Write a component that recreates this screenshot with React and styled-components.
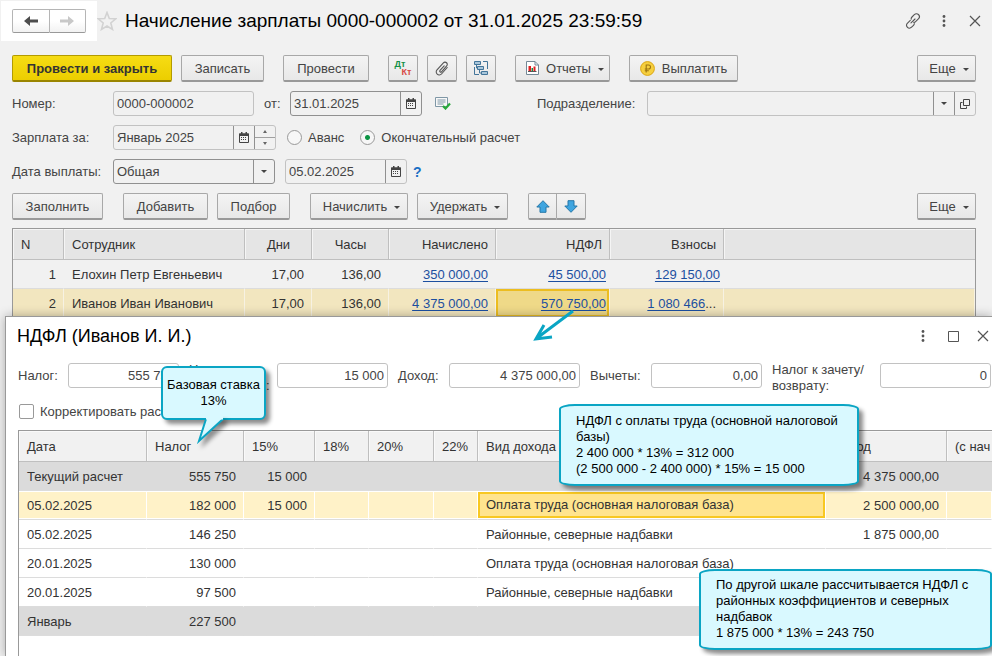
import React from "react";
import styled, { createGlobalStyle, css } from "styled-components";

const GlobalStyle = createGlobalStyle`
  *, *::before, *::after { box-sizing: border-box; }
  body { margin: 0; background: #f1f1f1; }
  body, button, input, select {
    font-family: "Liberation Sans", Arial, sans-serif;
    font-size: 13px;
    color: #444;
  }
`;

const Page = styled.div`
  position: relative;
  min-height: 100vh;
  overflow: hidden;
  background: #f1f1f1;
`;

/* ---------- document window ---------- */

const TitleBar = styled.header`
  display: flex;
  align-items: center;
  height: 41px;
  padding: 1px 9px 0 1px;
`;

const NavBox = styled.nav`
  display: flex;
  width: 96px;
  height: 40px;
  padding: 8px 11px;
  background: #fff;
`;

const NavButton = styled.button`
  display: flex;
  flex: 1;
  align-items: center;
  justify-content: center;
  padding: 0;
  border: 1px solid #b5b5b5;
  border-bottom-color: #999;
  background: linear-gradient(#fff 50%, #f2f2f2);
  color: ${(p) => (p.$dim ? "#c8c8c8" : "#4d4d4d")};
  &:first-child { border-radius: 2px 0 0 2px; }
  &:last-child { border-left: 0; border-radius: 0 2px 2px 0; }
`;

const Heading = styled.h1`
  margin: 0 0 0 8px;
  font-size: ${(p) => p.$size || 19}px;
  font-weight: 400;
  color: #000;
  white-space: nowrap;
`;

const WindowTools = styled.div`
  display: flex;
  align-items: center;
  gap: ${(p) => p.$gap || 14}px;
  margin-left: auto;
`;

const GhostButton = styled.button`
  display: flex;
  align-items: center;
  justify-content: center;
  width: 16px;
  height: 16px;
  padding: 0;
  border: 0;
  background: none;
  color: #555;
`;

const Star = styled(GhostButton)`
  width: 20px;
  height: 20px;
`;

const Form = styled.main`
  display: flex;
  flex-direction: column;
  gap: 9px;
  padding: 14px 16px 8px 12px;
`;

const Bar = styled.div`
  display: flex;
  gap: ${(p) => p.$gap || 19}px;
  height: 27px;
`;

const Cluster = styled.div`
  display: flex;
  gap: 9px;
`;

const Push = styled.div`
  margin-left: auto;
`;

const Button = styled.button`
  display: flex;
  align-items: center;
  justify-content: center;
  gap: 7px;
  width: ${(p) => p.$w}px;
  height: 27px;
  padding: 0 0 0 ${(p) => (p.$menu ? 5 : 0)}px;
  border: 1px solid #a8a8a8;
  border-bottom: 2px solid #999;
  border-radius: 2px;
  background: linear-gradient(#f4f4f4, #e8e8e8);
  white-space: nowrap;
  ${(p) =>
    p.$primary &&
    css`
      border-color: #b39b00;
      border-bottom-color: #9a8500;
      background: linear-gradient(#f6dc14, #ecce00);
      color: #333;
      font-weight: 700;
    `}
`;

const Joined = styled.div`
  display: flex;
  & > button:first-child { border-radius: 2px 0 0 2px; }
  & > button:last-child { border-left: 0; border-radius: 0 2px 2px 0; }
`;

const DtKt = styled.span`
  display: grid;
  width: 17px;
  font-size: 9px;
  font-weight: 700;
  line-height: 8px;
  text-align: left;
  color: #159048;
  & > span:last-child { color: #d84a45; text-align: right; }
`;

const FieldRow = styled.div`
  display: flex;
  align-items: center;
  height: 25px;
`;

const Label = styled.label`
  flex: none;
  width: ${(p) => (p.$w ? p.$w + "px" : "auto")};
  margin-left: ${(p) => p.$ml || 0}px;
  padding-top: ${(p) => (p.$tall ? 4 : 0)}px;
  line-height: 16px;
  white-space: nowrap;
`;

const Box = styled.div`
  display: flex;
  flex: ${(p) => (p.$w ? "none" : 1)};
  width: ${(p) => (p.$w ? p.$w + "px" : "auto")};
  height: 25px;
  overflow: hidden;
  border: 1px solid ${(p) => (p.$strong ? "#909090" : "#c2c2c2")};
  border-radius: 3px;
  background: ${(p) => (p.$white ? "#fff" : "transparent")};
`;

const control = css`
  flex: 1;
  min-width: 0;
  padding: 0 3px;
  border: 0;
  outline: 0;
  background: none;
`;

const TextInput = styled.input`
  ${control}
  text-align: ${(p) => (p.$right ? "right" : "left")};
`;

const Select = styled.select`
  ${control}
  appearance: none;
`;

const Side = styled.button`
  display: flex;
  flex: none;
  align-items: center;
  justify-content: center;
  width: 21px;
  padding: 0;
  border: 0;
  border-left: 1px solid #909090;
  background: none;
`;

const Spinner = styled.div`
  display: flex;
  flex-direction: column;
  width: 21px;
  border-left: 1px solid #909090;
  & > button {
    display: flex;
    flex: 1;
    align-items: center;
    justify-content: center;
    padding: 0;
    border: 0;
    background: none;
  }
  & > button:last-child { border-top: 1px solid #a0a0a0; }
`;

const Radio = styled.input.attrs({ type: "radio" })`
  appearance: none;
  flex: none;
  width: 15px;
  height: 15px;
  margin: 0 6px 0 0;
  border: 1px solid #999;
  border-radius: 50%;
  background: #f7f7f7;
  &:checked { background: radial-gradient(circle, #0c9444 0 2px, #f7f7f7 3px); }
`;

const RadioLabel = styled.label`
  display: flex;
  align-items: center;
  margin-left: ${(p) => p.$ml}px;
`;

const Save = styled.span`
  display: flex;
  margin-left: 13px;
`;

const Help = styled.a`
  margin-left: 6px;
  font-size: 14px;
  font-weight: 700;
  color: #1a6fc4;
  text-decoration: none;
`;

/* ---------- tables ---------- */

const Table = styled.table`
  width: 100%;
  table-layout: fixed;
  border-collapse: separate;
  border-spacing: 0;
  color: #333;
`;

const StaffTable = styled(Table)`
  border: 1px solid #999;
`;

const StaffWrap = styled.div`
  padding: 0 16px 0 12px;
`;

const Col = styled.col`
  width: ${(p) => (p.$w ? p.$w + "px" : "auto")};
`;

const cell = css`
  overflow: hidden;
  padding: 0 ${(p) => p.$pr || 7}px 0 8px;
  text-align: ${(p) => p.$align || "left"};
  font-weight: 400;
  white-space: nowrap;
`;

const Th = styled.th`
  ${cell}
  height: 31px;
  border-right: 1px solid #bfbfbf;
  border-bottom: 1px solid #bfbfbf;
  background: ${(p) => (p.$light ? "#f1f1f1" : "#e5e5e5")};
  box-shadow: inset 1px 1px 0 rgba(255, 255, 255, 0.6);
  &:last-child { border-right: 0; padding-right: 0; }
`;

const Td = styled.td`
  ${cell}
  height: 29px;
  border-right: 1px solid transparent;
  border-bottom: 1px solid #dcdcdc;
`;

const StaffRow = styled.tr`
  ${(p) =>
    p.$current &&
    css`
      background: #f2e6bf;
      & > td { border-right-color: #f7f2e3; }
    `}
`;

const TaxRow = styled.tr`
  background: ${(p) =>
    p.$kind === "total" ? "#dbdbdb" : p.$kind === "current" ? "#fff2c8" : "#fff"};
  ${(p) =>
    p.$kind === "current" &&
    css`
      & > td { border-right-color: #fff; box-shadow: inset 0 1px 0 #fff, inset 0 -1px 0 #fff; }
    `}
`;

const StaffActive = styled(Td)`
  background: #efd988;
  box-shadow: inset 0 0 0 2px #ecbd20;
`;

const TaxActive = styled(Td)`
  && { box-shadow: inset 0 1px 0 #fff, inset 0 -1px 0 #fff; padding: 0; }
`;

const ActiveFrame = styled.div`
  height: 26px;
  padding: 0 6px;
  border: 2px solid #f8c822;
  background: #ffe48e;
  line-height: 22px;
`;

const Link = styled.a`
  color: #1c4fa0;
  text-decoration: underline;
  text-underline-offset: 2px;
`;

/* ---------- tax dialog ---------- */

const Dialog = styled.section`
  position: absolute;
  top: 316px;
  right: 0;
  bottom: 0;
  left: 5px;
  border-top: 1px solid #999;
  border-left: 1px solid #999;
  background: #fff;
  box-shadow: 0 0 10px rgba(0, 0, 0, 0.3);
`;

const DialogTitle = styled.header`
  display: flex;
  align-items: center;
  height: 38px;
  padding-right: 1px;
  padding-left: 3px;
`;

const DialogFields = styled.div`
  display: flex;
  align-items: center;
  gap: 10px;
  margin-top: 8px;
  padding: 0 1px 0 12px;
  height: 25px;
`;

const WideLabel = styled(Label)`
  flex: 1;
`;

const CheckRow = styled.label`
  display: flex;
  align-items: center;
  gap: 6px;
  height: 16px;
  margin: 15px 0 11px 13px;
`;

const Checkbox = styled.input.attrs({ type: "checkbox" })`
  appearance: none;
  width: 15px;
  height: 15px;
  margin: 0;
  border: 1px solid #999;
  border-radius: 2px;
  background: #fff;
`;

const TaxWrap = styled.div`
  height: 226px;
  margin-left: 12px;
  border-top: 1px solid #999;
  border-left: 1px solid #999;
`;

/* ---------- notes over the windows ---------- */

const Note = styled.aside`
  position: absolute;
  border: 2px solid #0aa5c4;
  background: #d9f9ff;
  box-shadow: 4px 4px 4px rgba(0, 0, 0, 0.45);
  line-height: 16px;
  color: #000;
`;

const RateNote = styled(Note)`
  top: 366px;
  left: 161px;
  width: 105px;
  height: 54px;
  padding: 9px 0;
  border-radius: 6px;
  text-align: center;
  white-space: nowrap;
`;

const BaseNote = styled(Note)`
  top: 404px;
  left: 559px;
  width: 300px;
  padding: 7px 15px 7px;
  border-radius: 16px / 5px;
`;

const ScaleNote = styled(Note)`
  top: 569px;
  left: 699px;
  width: 293px;
  padding: 6px 15px 7px;
  border-radius: 16px / 5px;
`;

const Tail = styled.svg`
  position: absolute;
  top: 48px;
  left: 32px;
  overflow: visible;
  filter: drop-shadow(4px 4px 2px rgba(0, 0, 0, 0.4));
  clip-path: inset(0 -20px -20px -20px);
`;

const Arrow = styled.svg`
  position: absolute;
  top: 306px;
  left: 530px;
`;

/* ---------- icons ---------- */

const BackIcon = ({ flip }) => (
  <svg width="16" height="14" viewBox="0 0 16 14" fill="currentColor" aria-hidden="true">
    <path transform={flip ? "matrix(-1 0 0 1 16 0)" : undefined} d="M1 7l6-5v3.5h8v3H7V12z" />
  </svg>
);

const StarIcon = () => (
  <svg width="20" height="20" viewBox="0 0 20 20" fill="none" stroke="#d2d2d2" strokeWidth="1.600" aria-hidden="true">
    <path d="M10 1.500l2.300 6 6.500.3-5 4.200 1.700 6.400L10 15l-5.500 3.400 1.700-6.400-5-4.200 6.500-.3z" />
  </svg>
);

const ChainIcon = () => (
  <svg width="16" height="16" viewBox="0 0 16 16" fill="none" stroke="currentColor" strokeWidth="1.100" strokeLinecap="round" aria-hidden="true">
    <path d="M6.200 6.200C6 5.200 6.300 4.700 7 4l2.300-2.300c1.300-1.300 3-1.300 4.100-.2s1.500 2.800.2 4.100l-3 3c-.6.600-1.200.900-2 .700M9.300 10.500c0 .8-.3 1.300-.8 1.800l-1.900 1.900c-1.300 1.300-3 1.300-4.100.2s-1.500-2.800-.2-4.100l3-3M6 9.900L10 6" />
  </svg>
);

const DotsIcon = () => (
  <svg width="4" height="14" viewBox="0 0 4 14" fill="currentColor" aria-hidden="true">
    <circle cx="2" cy="2.500" r="1.400" /><circle cx="2" cy="7" r="1.400" /><circle cx="2" cy="11.500" r="1.400" />
  </svg>
);

const CrossIcon = () => (
  <svg width="12" height="12" viewBox="0 0 12 12" stroke="currentColor" strokeWidth="1.200" aria-hidden="true">
    <path d="M1 1l10 10M11 1L1 11" />
  </svg>
);

const SquareIcon = () => (
  <svg width="11" height="11" viewBox="0 0 11 11" fill="none" stroke="currentColor" aria-hidden="true">
    <path d="M.5.5h10v10H.5z" />
  </svg>
);

const Caret = () => (
  <svg width="6" height="4" viewBox="0 0 6 4" fill="#444" aria-hidden="true">
    <path d="M0 0h6L3 3z" />
  </svg>
);

const CaretBox = styled.span`
  display: flex;
  padding-top: 4px;
`;

const TinyTriangle = ({ up }) => (
  <svg width="4" height="3" viewBox="0 0 4 3" fill="#666" aria-hidden="true">
    <path d={up ? "M0 3h4L2 0z" : "M0 0h4L2 3z"} />
  </svg>
);

const CalendarIcon = () => (
  <svg width="10" height="11" viewBox="0 0 10 11" aria-hidden="true">
    <path d="M.5 2h9v8.500h-9z" fill="none" stroke="#444" />
    <path d="M0 1.500h10V4H0zM2 0h1.500v2H2zM6.500 0H8v2H6.500z" fill="#444" />
    <path d="M2 5.500h6M2 7.500h6" stroke="#444" strokeDasharray="1 1" />
  </svg>
);

const ClipIcon = () => (
  <svg width="14" height="15" viewBox="0 0 14 15" fill="none" stroke="#555" strokeWidth="1.100" strokeLinecap="round" aria-hidden="true">
    <path d="M9.200 4.800L5 9.400a1 1 0 0 0 1.500 1.400l5.200-5.900a2.200 2.200 0 0 0-3.300-3L2 8.900a3 3 0 0 0 4.500 4.100l5.700-6.500" />
  </svg>
);

const StructureIcon = () => (
  <svg width="16" height="15" viewBox="0 0 16 15" fill="#a9c6da" stroke="#43759a" aria-hidden="true">
    <path d="M1.500.5h6v3h-6zM4.500 5.500h6v3h-6zM8.500 10.500h6v3h-6z" />
    <path d="M10 .5h4.500V8M1.500 6v7.500H6M3.500 3.500v3.500h1M6.500 8.500V12h2" fill="none" />
  </svg>
);

const ReportIcon = () => (
  <svg width="13" height="14" viewBox="0 0 13 14" aria-hidden="true">
    <path d="M.5.500h8.500l3.500 3.500v9.500H.5z" fill="#fff" stroke="#758896" />
    <path d="M9 .5V4h3.500" fill="none" stroke="#758896" />
    <path d="M2.500 5H5v5H2.500z" fill="#e02020" />
    <path d="M5.500 7h1.500v3H5.500z" fill="#159048" />
    <path d="M7.500 5.500H9.500V10H7.500z" fill="#e02020" />
    <path d="M2 10.500h8.500" stroke="#555" />
  </svg>
);

const CoinIcon = () => (
  <svg width="15" height="15" viewBox="0 0 15 15" aria-hidden="true">
    <circle cx="7.500" cy="7.500" r="6.900" fill="#f6cf3e" stroke="#dba514" />
    <path d="M6.200 11.500V4h2.300a2 2 0 0 1 0 4H4.800M4.800 9.800h4" fill="none" stroke="#9c7410" strokeWidth="1.100" />
  </svg>
);

const PostedIcon = () => (
  <svg width="16" height="13" viewBox="0 0 16 13" fill="none" aria-hidden="true">
    <path d="M.5.5h12v9H.5z" stroke="#7f97a6" fill="#f8f8f8" />
    <path d="M2.500 3h8M2.500 5h8M2.500 7h6" stroke="#7f97a6" />
    <path d="M8 9l2.500 2.500L15 6.500" stroke="#27a83a" strokeWidth="2.200" />
  </svg>
);

const OpenIcon = () => (
  <svg width="10" height="10" viewBox="0 0 10 10" fill="none" stroke="#444" aria-hidden="true">
    <path d="M3.500.5h6v6h-6zM2.500 3.500h-2v6h6v-2" />
  </svg>
);

const MoveIcon = ({ down }) => (
  <svg width="14" height="13" viewBox="0 0 14 13" fill="#3ea5e0" stroke="#2577a8" aria-hidden="true">
    <path transform={down ? "matrix(1 0 0 -1 0 13)" : undefined} d="M7 .700L13.200 7H10v5.300H4V7H.800z" />
  </svg>
);

/* ---------- data ---------- */

const staff = [
  { n: 1, name: "Елохин Петр Евгеньевич", accrued: "350 000,00", tax: "45 500,00", fees: "129 150,00" },
  { n: 2, name: "Иванов Иван Иванович", accrued: "4 375 000,00", tax: "570 750,00", fees: "1 080 466", cut: true, current: true },
];

const taxes = [
  { kind: "total", date: "Текущий расчет", tax: "555 750", t15: "15 000", income: "4 375 000,00" },
  { kind: "current", date: "05.02.2025", tax: "182 000", t15: "15 000", type: "Оплата труда (основная налоговая база)", income: "2 500 000,00" },
  { date: "05.02.2025", tax: "146 250", type: "Районные, северные надбавки", income: "1 875 000,00" },
  { date: "20.01.2025", tax: "130 000", type: "Оплата труда (основная налоговая база)" },
  { date: "20.01.2025", tax: "97 500", type: "Районные, северные надбавки" },
  { kind: "total", date: "Январь", tax: "227 500" },
];

const MenuButton = ({ w, icon, children }) => (
  <Button $w={w} $menu>
    {icon}
    {children}
    <CaretBox><Caret /></CaretBox>
  </Button>
);

const DateBox = ({ id, w, value, strong, label, children }) => (
  <Box $w={w} $strong={strong}>
    <TextInput id={id} aria-label={label} defaultValue={value} />
    <Side aria-label="Календарь"><CalendarIcon /></Side>
    {children}
  </Box>
);

const AmountBox = ({ id, w = 111, value }) => (
  <Box $w={w} $white>
    <TextInput id={id} $right defaultValue={value} />
  </Box>
);

function PayrollForm() {
  return (
    <>
      <TitleBar>
        <NavBox aria-label="История">
          <NavButton aria-label="Назад"><BackIcon /></NavButton>
          <NavButton aria-label="Вперед" $dim><BackIcon flip /></NavButton>
        </NavBox>
        <Star aria-label="В избранное"><StarIcon /></Star>
        <Heading>Начисление зарплаты 0000-000002 от 31.01.2025 23:59:59</Heading>
        <WindowTools $gap={15}>
          <GhostButton aria-label="Ссылка"><ChainIcon /></GhostButton>
          <GhostButton aria-label="Меню"><DotsIcon /></GhostButton>
          <GhostButton aria-label="Закрыть"><CrossIcon /></GhostButton>
        </WindowTools>
      </TitleBar>
      <Form>
        <Bar>
          <Cluster>
            <Button $w={160} $primary>Провести и закрыть</Button>
            <Button $w={83}>Записать</Button>
          </Cluster>
          <Button $w={86}>Провести</Button>
          <Cluster>
            <Button $w={30} aria-label="Проводки"><DtKt><span>Дт</span><span>Кт</span></DtKt></Button>
            <Button $w={30} aria-label="Файлы"><ClipIcon /></Button>
            <Button $w={30} aria-label="Структура"><StructureIcon /></Button>
          </Cluster>
          <MenuButton w={95} icon={<ReportIcon />}>Отчеты</MenuButton>
          <Button $w={109}><CoinIcon />Выплатить</Button>
          <Push><MenuButton w={59}>Еще</MenuButton></Push>
        </Bar>
        <FieldRow>
          <Label htmlFor="number" $w={101}>Номер:</Label>
          <Box $w={141}><TextInput id="number" defaultValue="0000-000002" /></Box>
          <Label htmlFor="date" $w={26} $ml={10}>от:</Label>
          <DateBox id="date" w={132} value="31.01.2025" strong />
          <Save><PostedIcon /></Save>
          <Label htmlFor="unit" $w={110} $ml={86}>Подразделение:</Label>
          <Box>
            <TextInput id="unit" />
            <Side aria-label="Выбрать"><Caret /></Side>
            <Side aria-label="Открыть"><OpenIcon /></Side>
          </Box>
        </FieldRow>
        <FieldRow>
          <Label htmlFor="month" $w={101}>Зарплата за:</Label>
          <DateBox id="month" w={163} value="Январь 2025">
            <Spinner>
              <button aria-label="Следующий"><TinyTriangle up /></button>
              <button aria-label="Предыдущий"><TinyTriangle /></button>
            </Spinner>
          </DateBox>
          <RadioLabel $ml={11}><Radio name="kind" />Аванс</RadioLabel>
          <RadioLabel $ml={16}><Radio name="kind" defaultChecked />Окончательный расчет</RadioLabel>
        </FieldRow>
        <FieldRow>
          <Label htmlFor="payday" $w={101}>Дата выплаты:</Label>
          <Box $w={162} $strong>
            <Select id="payday" defaultValue="Общая"><option>Общая</option></Select>
            <Side aria-label="Список"><Caret /></Side>
          </Box>
          <Label as="span" $w={10} />
          <DateBox id="paydate" label="День выплаты" w={122} value="05.02.2025" />
          <Help href="#help">?</Help>
        </FieldRow>
        <Bar $gap={20}>
          <Button $w={91}>Заполнить</Button>
          <Cluster>
            <Button $w={85}>Добавить</Button>
            <Button $w={73}>Подбор</Button>
          </Cluster>
          <Cluster>
            <MenuButton w={98}>Начислить</MenuButton>
            <MenuButton w={91}>Удержать</MenuButton>
          </Cluster>
          <Joined>
            <Button $w={29} aria-label="Вверх"><MoveIcon /></Button>
            <Button $w={29} aria-label="Вниз"><MoveIcon down /></Button>
          </Joined>
          <Push><MenuButton w={59}>Еще</MenuButton></Push>
        </Bar>
      </Form>
      <StaffWrap>
        <StaffTable>
          <colgroup>
            {[51, 181, 67, 77, 107, 114, 114, 0].map((w, i) => <Col key={i} $w={w} />)}
          </colgroup>
          <thead>
            <tr>
              <Th>N</Th>
              <Th>Сотрудник</Th>
              <Th $align="center">Дни</Th>
              <Th $align="center">Часы</Th>
              <Th $align="right">Начислено</Th>
              <Th $align="right">НДФЛ</Th>
              <Th $align="right">Взносы</Th>
              <Th />
            </tr>
          </thead>
          <tbody>
            {staff.map((s) => {
              const TaxCell = s.current ? StaffActive : Td;
              return (
                <StaffRow key={s.n} $current={s.current}>
                  <Td $align="right">{s.n}</Td>
                  <Td>{s.name}</Td>
                  <Td $align="right">17,00</Td>
                  <Td $align="right">136,00</Td>
                  <Td $align="right"><Link href="#accrued">{s.accrued}</Link></Td>
                  <TaxCell $align="right" $pr={3}><Link href="#tax">{s.tax}</Link></TaxCell>
                  <Td $align="right" $pr={s.cut ? 7 : 3}><Link href="#fees">{s.fees}</Link>{s.cut && "..."}</Td>
                  <Td />
                </StaffRow>
              );
            })}
          </tbody>
        </StaffTable>
      </StaffWrap>
    </>
  );
}

function TaxDialog() {
  return (
    <Dialog role="dialog" aria-label="НДФЛ">
      <DialogTitle>
        <Heading as="h2" $size={18}>НДФЛ (Иванов И. И.)</Heading>
        <WindowTools>
          <GhostButton aria-label="Меню"><DotsIcon /></GhostButton>
          <GhostButton aria-label="Развернуть"><SquareIcon /></GhostButton>
          <GhostButton aria-label="Закрыть"><CrossIcon /></GhostButton>
        </WindowTools>
      </DialogTitle>
      <DialogFields>
        <Label htmlFor="tax" $w={40}>Налог:</Label>
        <AmountBox id="tax" value="555 750" />
        <Label htmlFor="over" $w={78} $tall>Налог с<br />превышения:</Label>
        <AmountBox id="over" value="15 000" />
        <Label htmlFor="income" $w={41}>Доход:</Label>
        <AmountBox id="income" w={131} value="4 375 000,00" />
        <Label htmlFor="deduct" $w={51}>Вычеты:</Label>
        <AmountBox id="deduct" value="0,00" />
        <WideLabel htmlFor="credit" $tall>Налог к зачету/<br />возврату:</WideLabel>
        <AmountBox id="credit" value="0" />
      </DialogFields>
      <CheckRow><Checkbox />Корректировать расчет</CheckRow>
      <TaxWrap>
        <Table>
          <colgroup>
            {[128, 97, 71, 54, 65, 44, 348, 121, 0].map((w, i) => <Col key={i} $w={w} />)}
          </colgroup>
          <thead>
            <tr>
              {["Дата", "Налог", "15%", "18%", "20%", "22%", "Вид дохода", "Доход", "(с нач"].map((t) => (
                <Th key={t} $light>{t}</Th>
              ))}
            </tr>
          </thead>
          <tbody>
            {taxes.map((r, i) => (
              <TaxRow key={i} $kind={r.kind}>
                <Td>{r.date}</Td>
                <Td $align="right">{r.tax}</Td>
                <Td $align="right">{r.t15}</Td>
                <Td />
                <Td />
                <Td />
                {r.kind === "current" ? (
                  <TaxActive><ActiveFrame>{r.type}</ActiveFrame></TaxActive>
                ) : (
                  <Td>{r.type}</Td>
                )}
                <Td $align="right">{r.income}</Td>
                <Td />
              </TaxRow>
            ))}
          </tbody>
        </Table>
      </TaxWrap>
    </Dialog>
  );
}

export default function App() {
  return (
    <Page>
      <GlobalStyle />
      <PayrollForm />
      <TaxDialog />
      <RateNote>
        Базовая ставка<br />13%
        <Tail width="32" height="28" viewBox="0 0 32 28" aria-hidden="true">
          <path d="M11 3L4 25L28 3" fill="#d9f9ff" stroke="#0aa5c4" strokeWidth="2" />
          <path d="M11 0h17v3.500h-17z" fill="#d9f9ff" />
        </Tail>
      </RateNote>
      <BaseNote>
        НДФЛ с оплаты труда (основной налоговой базы)<br />
        2 400 000 * 13% = 312 000<br />
        (2 500 000 - 2 400 000) * 15% = 15 000
      </BaseNote>
      <ScaleNote>
        По другой шкале рассчитывается НДФЛ с районных коэффициентов и северных надбавок<br />
        1 875 000 * 13% = 243 750
      </ScaleNote>
      <Arrow width="50" height="40" viewBox="0 0 50 40" fill="none" stroke="#0aa5c4" strokeWidth="3" aria-hidden="true">
        <path d="M43 5L7 32M14 19L6 33L22 31" />
      </Arrow>
    </Page>
  );
}
